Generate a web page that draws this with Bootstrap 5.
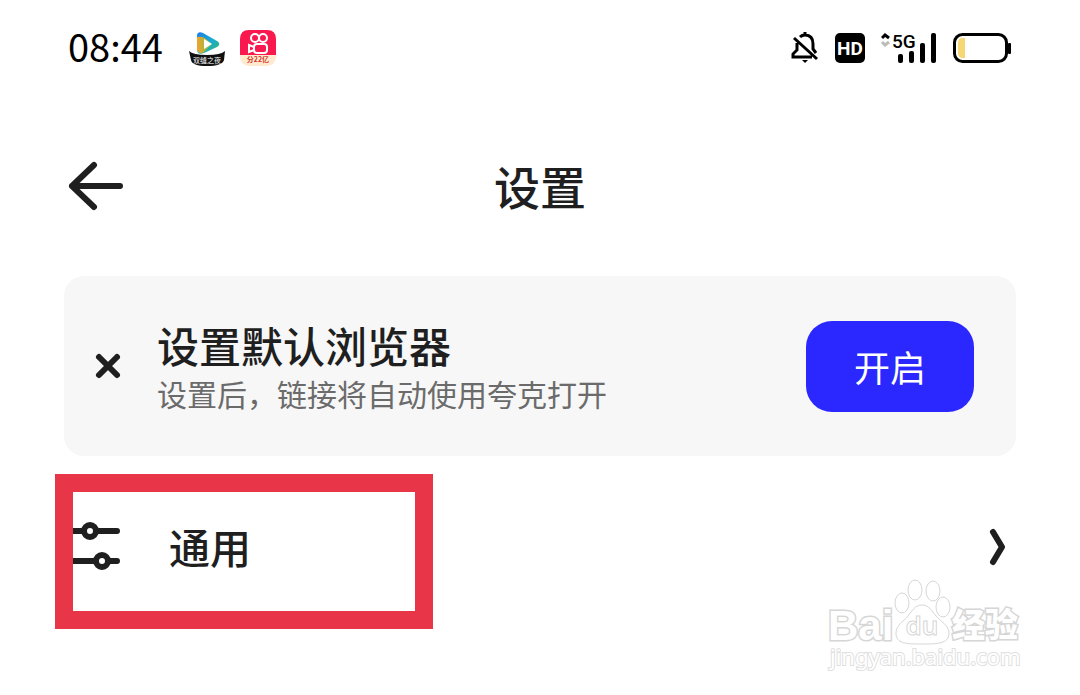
<!DOCTYPE html>
<html lang="zh-CN">
<head>
<meta charset="utf-8">
<meta name="viewport" content="width=device-width, initial-scale=1">
<title>设置</title>
<link href="https://cdn.jsdelivr.net/npm/bootstrap@5.3.0/dist/css/bootstrap.min.css" rel="stylesheet">
<style>
  body { font-family: "Noto Sans CJK SC", "Noto Sans", sans-serif; color: #1f1f1f; background: #fff; }
  svg { display: block; flex: none; }
  a { color: inherit; text-decoration: none; }
  .screen { padding: 0 64px; }
  .status { height: 96px; color: #000; padding: 0 4px; }
  .clock { font-size: 38px; line-height: 40px; padding-bottom: 5px; }
  .signals { gap: 16px; }
  .topbar { height: 180px; display: grid; grid-template-columns: 60px 1fr 60px; padding: 0 4px; }
  .page-title { font-size: 46px; line-height: 56px; font-weight: 500; padding-bottom: 3px; }
  .notice { background: #f7f7f7; border: 0; border-radius: 20px; min-height: 180px; padding: 0 42px 0 30px; }
  .notice-body { margin-left: 35px; padding-top: 6px; }
  .notice-title { font-size: 42px; line-height: 48px; font-weight: 500; }
  .notice-text { font-size: 30px; line-height: 48px; color: #6b6b6b; }
  .icon-btn { border: 0; background: none; padding: 0; color: inherit; }
  .enable { background: #2b28ff; color: #fff; font-size: 36px; line-height: 48px; font-weight: 400; width: 168px; height: 91px; border-radius: 26px; }
  .enable:hover { background: #1f1ce0; color: #fff; }
  .item { height: 155px; margin-top: 18px; margin-left: -9px; }
  .item-main { width: 378px; height: 155px; border: 18px solid #e83548; padding-bottom: 11px; }
  .item-label { font-size: 41px; line-height: 48px; font-weight: 500; }
  .chev { margin: 0 9px 10px 0; }
  .wm { position: absolute; right: 54px; bottom: 14px; }
</style>
</head>
<body>
<div class="screen position-relative">
  <header class="status d-flex align-items-center justify-content-between">
    <div class="d-flex align-items-center">
      <time class="clock">08:44</time>
      <svg class="ms-4" width="40" height="40" viewBox="0 0 40 40" aria-hidden="true">
        <defs>
          <linearGradient id="play" x1="0" y1="0" x2="1" y2="1"><stop offset="0" stop-color="#1c7de8"/><stop offset=".5" stop-color="#19a9d9"/><stop offset="1" stop-color="#30bd62"/></linearGradient>
          <linearGradient id="leaf" x1="0" y1="0" x2="1" y2="0"><stop offset="0" stop-color="#f5a22c"/><stop offset="1" stop-color="#6cc64a"/></linearGradient>
        </defs>
        <path d="M10 8c0-3 2-5 6-3l14 8c3 2 3 4 0 6l-13 6c-5 2-7 0-7-4z" fill="url(#play)"/>
        <path d="M10 9q6-1 9 2l6 5-9 9q-4 1-6-3z" fill="url(#leaf)"/>
        <path d="M17 11l8 5-8 5z" fill="#fff"/>
        <path d="M2 23q4 4 18 4t18-4l-1 9q-2 6-17 6T4 32z" fill="#101010"/>
        <text x="20" y="35" font-size="7" text-anchor="middle" fill="#fff">双缝之夜</text>
      </svg>
      <svg class="ms-2" width="44" height="40" viewBox="0 0 44 40" aria-hidden="true">
        <rect x="5" y="2" width="36" height="36" rx="9" fill="#ffe9cf"/>
        <path d="M5 27V11q0-9 9-9h18q9 0 9 9v16z" fill="#f9194e"/>
        <g fill="none" stroke="#fff" stroke-width="2"><circle cx="20" cy="10" r="4"/><circle cx="28" cy="10" r="4"/><rect x="19" y="16" width="13" height="9" rx="3"/><path d="M19 19l-5-2v7l5-2"/></g>
        <text x="23" y="34" font-size="7" font-weight="700" text-anchor="middle" fill="#d33a2c">分22亿</text>
      </svg>
    </div>
    <div class="signals d-flex align-items-center">
      <svg width="28" height="32" viewBox="0 0 28 32" fill="none" stroke="#000" stroke-width="3" aria-label="静音">
        <path d="M9 5q2-2 5-2 8 0 8 9v5l3 4M14 4V0M6 11v7l-4 4v3h19M3 6l23 21"/><path d="M11 28h6l-3 3z" fill="#000" stroke="none"/>
      </svg>
      <svg width="30" height="30" viewBox="0 0 30 30" aria-label="HD">
        <rect width="30" height="30" rx="5"/><text x="15" y="22" font-family="Roboto" font-weight="700" font-size="19" text-anchor="middle" fill="#fff">HD</text>
      </svg>
      <svg width="56" height="36" viewBox="0 0 56 36" aria-label="5G">
        <path d="M1 8l3-3 4 3" fill="none" stroke="#000" stroke-width="3"/><path d="M1 12l3 3 4-3" fill="none" stroke="#bbb" stroke-width="3"/>
        <text x="11" y="18" font-family="Roboto" font-weight="500" font-size="19">5G</text>
        <rect x="17" y="24" width="5" height="9" rx="2"/><rect x="28" y="21" width="5" height="12" rx="2"/><rect x="39" y="13" width="5" height="20" rx="2"/><rect x="50" y="3" width="5" height="30" rx="2"/>
      </svg>
      <svg width="59" height="30" viewBox="0 0 59 30" aria-label="电量">
        <rect x="1.5" y="1.5" width="52" height="27" rx="8" fill="none" stroke="#000" stroke-width="3"/><path d="M12 5v20Q5 26 5 20V10q0-6 7-5z" fill="#f7d774"/><rect x="55" y="10" width="3" height="11" rx="1"/>
      </svg>
    </div>
  </header>

  <nav class="topbar align-items-center">
    <button class="icon-btn" type="button" aria-label="返回">
      <svg width="56" height="50" viewBox="0 0 56 50" fill="none" stroke="#1f1f1f" stroke-width="6" stroke-linecap="round" stroke-linejoin="round"><path d="M52 25H4M26 4L4 25l22 21"/></svg>
    </button>
    <h1 class="page-title text-center mb-0">设置</h1>
  </nav>

  <main>
    <section class="card notice flex-row align-items-center">
      <button class="icon-btn" type="button" aria-label="关闭">
        <svg width="28" height="28" viewBox="0 0 28 28" fill="none" stroke="#1f1f1f" stroke-width="6" stroke-linecap="round"><path d="M5 5l18 18M23 5L5 23"/></svg>
      </button>
      <div class="notice-body flex-grow-1">
        <h2 class="notice-title mb-0">设置默认浏览器</h2>
        <p class="notice-text mb-0">设置后，链接将自动使用夸克打开</p>
      </div>
      <button class="btn enable" type="button">开启</button>
    </section>

    <a class="item d-flex align-items-center justify-content-between" href="#general">
      <span class="item-main d-flex align-items-center">
        <svg width="48" height="50" viewBox="0 0 48 50" fill="none" stroke="#1f1f1f" stroke-width="6" aria-hidden="true"><path d="M0 10h44M0 40h44" /><path d="M44 10h0M44 40h0" stroke-linecap="round"/><circle cx="17" cy="10" r="6" fill="#fff"/><circle cx="29" cy="40" r="6" fill="#fff"/></svg>
        <span class="item-label ms-5">通用</span>
      </span>
      <svg class="chev" width="18" height="38" viewBox="0 0 18 38" fill="none" stroke="#1f1f1f" stroke-width="6" stroke-linecap="round" stroke-linejoin="round" aria-hidden="true"><path d="M4 4l9 15-9 15"/></svg>
    </a>
  </main>
  
</div>

<svg class="wm" width="200" height="104" viewBox="0 0 200 104" fill="#fff" stroke="#d6d6d6" stroke-width="1" aria-hidden="true">
  <g paint-order="stroke" stroke-width="3">
    <text x="2" y="63" font-family="Liberation Sans" font-size="42" font-weight="700">Bai</text>
  </g>
  <path d="M96 28c7 0 10 6 14 11s13 9 13 17c0 11-12 11-27 11s-26 0-26-11c0-8 8-12 12-17s7-11 14-11z"/>
  <ellipse cx="76" cy="26" rx="7" ry="10"/><ellipse cx="89" cy="13" rx="7" ry="10"/><ellipse cx="107" cy="14" rx="7" ry="10"/><ellipse cx="117" cy="30" rx="7" ry="10"/>
  <text x="96" y="58" font-family="Noto Sans" font-weight="600" font-size="26" text-anchor="middle">du</text>
  <g paint-order="stroke" stroke-width="3">
    <text x="126" y="60" font-family="Noto Sans CJK SC" font-weight="900" font-size="33">经验</text>
  </g>
  <text x="4" y="88" paint-order="stroke" stroke="#e0e0e0" stroke-width="2" font-family="Noto Sans" font-size="22">jingyan.baidu.com</text>
</svg>
</body>
</html>
